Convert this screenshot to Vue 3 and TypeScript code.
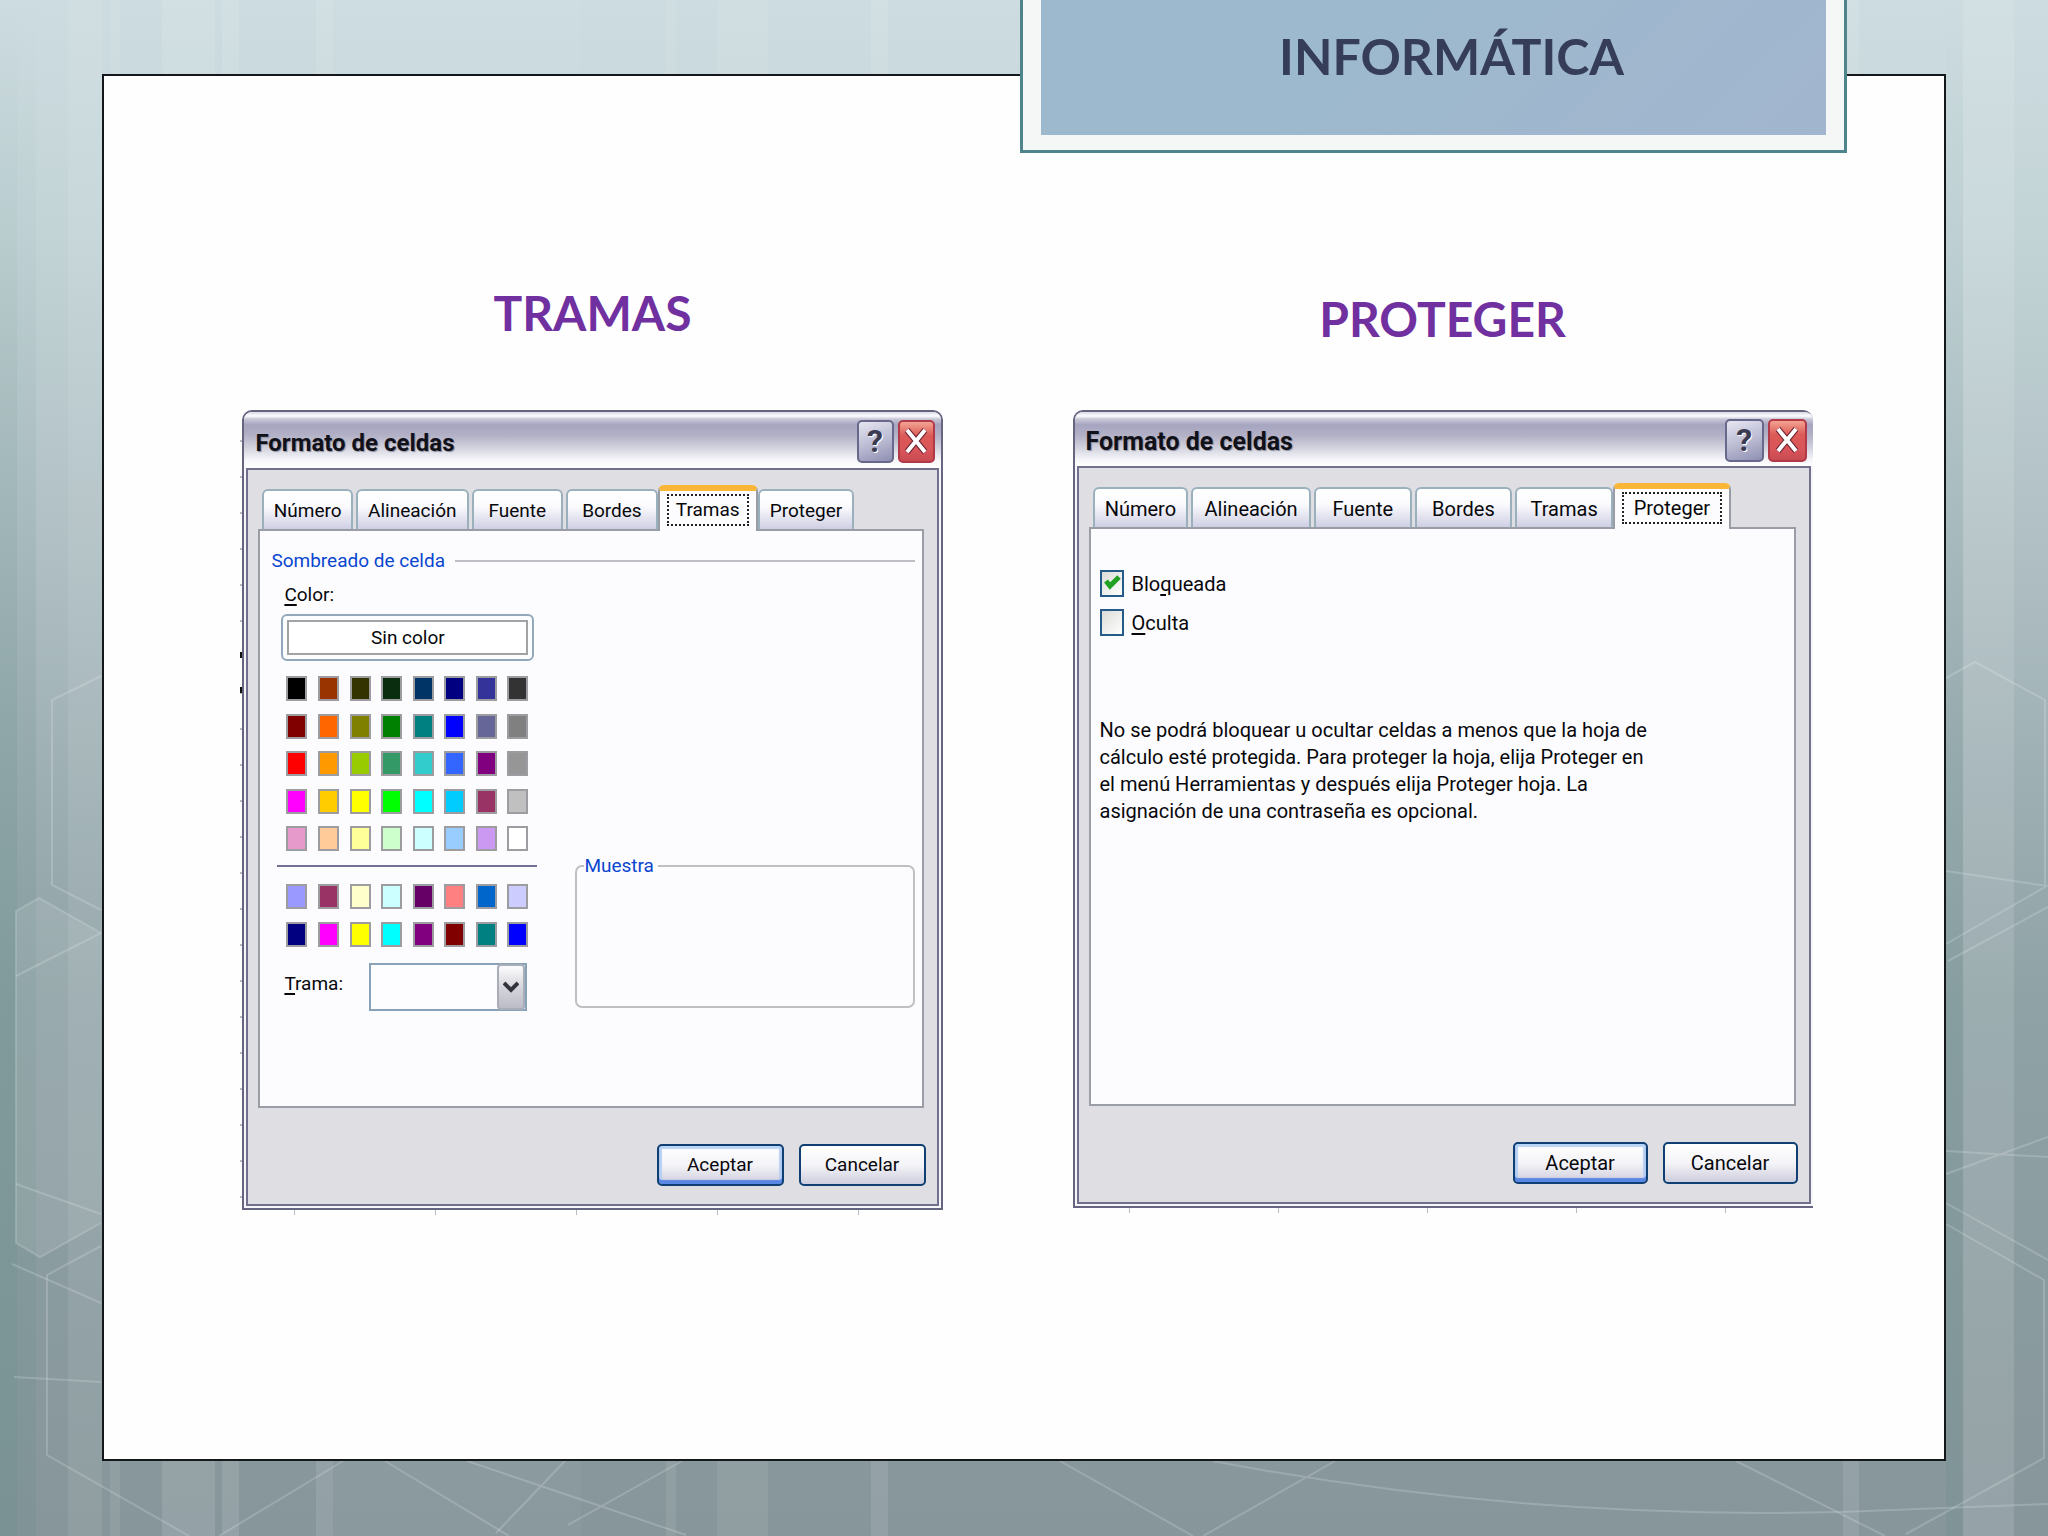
<script setup lang="ts">
import { ref } from 'vue'

interface Tab {
  name: string
  share: number
}

const fillTabs: Tab[] = [
  { name: 'Número', share: 91 },
  { name: 'Alineación', share: 114 },
  { name: 'Fuente', share: 92 },
  { name: 'Bordes', share: 92 },
  { name: 'Tramas', share: 101 },
  { name: 'Proteger', share: 97 },
]

const protectTabs: Tab[] = [
  { name: 'Número', share: 96 },
  { name: 'Alineación', share: 121 },
  { name: 'Fuente', share: 98 },
  { name: 'Bordes', share: 98 },
  { name: 'Tramas', share: 98 },
  { name: 'Proteger', share: 119 },
]

const mainColors: string[] = [
  '#000000', '#993300', '#333300', '#0a2d10', '#003366', '#000080', '#333399', '#333333',
  '#800000', '#ff6600', '#808000', '#008000', '#008080', '#0000ff', '#666699', '#808080',
  '#ff0000', '#ff9900', '#99cc00', '#339966', '#33cccc', '#3366ff', '#800080', '#969696',
  '#ff00ff', '#ffcc00', '#ffff00', '#00ff00', '#00ffff', '#00ccff', '#993366', '#c0c0c0',
  '#e69acb', '#ffcc99', '#ffff99', '#ccffcc', '#ccffff', '#99ccff', '#cc99f2', '#ffffff',
]

const extraColors: string[] = [
  '#9999ff', '#993366', '#ffffcc', '#ccffff', '#660066', '#ff8080', '#0066cc', '#ccccff',
  '#000080', '#ff00ff', '#ffff00', '#00ffff', '#800080', '#800000', '#008080', '#0000ff',
]

const stripes: [number, number, number][] = [
  [110, 10, 0.08], [162, 53, 0.11], [222, 17, 0.11], [316, 17, 0.1], [333, 248, 0.03],
  [666, 10, 0.08], [717, 51, 0.08], [871, 17, 0.1], [1843, 16, 0.1], [1963, 51, 0.12],
]

const locked = ref(true)
const hidden = ref(false)
</script>

<template>
  <div class="slide">
    <svg class="backdrop" viewBox="0 0 2048 1536" preserveAspectRatio="none" aria-hidden="true">
      <defs>
        <linearGradient id="base" x1="0" y1="0" x2="0" y2="1">
          <stop offset="0" stop-color="#cddce0" />
          <stop offset="0.15" stop-color="#c3d4d7" />
          <stop offset="0.35" stop-color="#b0c0c4" />
          <stop offset="0.5" stop-color="#9fb0b4" />
          <stop offset="0.65" stop-color="#8fa2a6" />
          <stop offset="0.85" stop-color="#8a9b9f" />
          <stop offset="1" stop-color="#87969b" />
        </linearGradient>
        <linearGradient id="edge" x1="0" y1="0" x2="0" y2="1">
          <stop offset="0" stop-color="#668c88" stop-opacity="0" />
          <stop offset="0.5" stop-color="#668c88" stop-opacity="0.18" />
          <stop offset="1" stop-color="#668c88" stop-opacity="0.22" />
        </linearGradient>
      </defs>
      <rect width="2048" height="1536" fill="url(#base)" />
      <rect width="17" height="1536" fill="url(#edge)" />
      <rect width="36" height="1536" fill="url(#edge)" />
      <rect x="68" y="0" width="34" height="1536" fill="#fff" opacity="0.08" />
      <rect x="1946" y="0" width="17" height="1536" fill="url(#edge)" />
      <rect
        v-for="s in stripes"
        :key="s[0]"
        :x="s[0]"
        y="0"
        :width="s[1]"
        height="1536"
        fill="#fff"
        :opacity="s[2]"
      />
      <path d="M16 911L39 898L101 933V1223L40 1257L16 1243Z" fill="#fff" opacity="0.09" />
      <g fill="none" stroke="#fff" stroke-opacity="0.18" stroke-width="2">
        <path d="M101 676L52 700V885L101 910M101 933L39 898L16 911V1243L40 1257L101 1223" />
        <path d="M16 976L101 933M16 1184L101 1214M12 1264L101 1303M14 1377L101 1382" />
        <path d="M101 1246L47 1275V1455L189 1536M219 1536L343 1461M385 1461L509 1536" />
        <path d="M467 1461L686 1535M565 1461L496 1533M568 1525L682 1461" />
        <path d="M1060 1461L1193 1536M1203 1536L1335 1461M1213 1461Q1520 1520 1840 1512L2048 1504" />
        <path d="M1736 1461L1885 1536M1906 1534L2044 1458V1280L1946 1224M1946 1203L2048 1260" />
        <path d="M1946 871L2048 886M1946 944L2045 887V700L1975 662L1946 678M1948 961L2048 907" />
        <path d="M1946 1151L2048 1157M1946 1174L2048 1137" />
      </g>
    </svg>

    <main class="sheet">
      <section class="column">
        <h2 class="heading">TRAMAS</h2>
        <div class="dialog fill">
          <header class="bar">
            <h3 class="bar-title">Formato de celdas</h3>
            <button type="button" class="tool help" aria-label="Ayuda">?</button>
            <button type="button" class="tool close" aria-label="Cerrar">
              <svg viewBox="0 0 24 26" aria-hidden="true">
                <path d="M3 2L21 24M21 2L3 24" stroke="#6b2030" stroke-width="6" />
                <path d="M3 2L21 24M21 2L3 24" stroke="#fff" stroke-width="4" />
              </svg>
            </button>
          </header>
          <div class="body">
            <div class="tabs" role="tablist">
              <button
                v-for="t in fillTabs"
                :key="t.name"
                type="button"
                role="tab"
                class="tab"
                :class="{ active: t.name === 'Tramas' }"
                :aria-selected="t.name === 'Tramas'"
                :style="{ flexGrow: t.share }"
              >
                <span class="tab-text">{{ t.name }}</span>
              </button>
            </div>
            <div class="panel" role="tabpanel">
              <div class="group-title"><span>Sombreado de celda</span></div>
              <div class="fill-grid">
                <div class="picker">
                  <div class="label"><u>C</u>olor:</div>
                  <button type="button" class="no-color"><span>Sin color</span></button>
                  <div class="palette">
                    <button
                      v-for="(c, i) in mainColors"
                      :key="i"
                      type="button"
                      class="swatch"
                      :aria-label="c"
                      :style="{ backgroundColor: c }"
                    ></button>
                  </div>
                  <hr class="rule" />
                  <div class="palette short">
                    <button
                      v-for="(c, i) in extraColors"
                      :key="i"
                      type="button"
                      class="swatch"
                      :aria-label="c"
                      :style="{ backgroundColor: c }"
                    ></button>
                  </div>
                  <div class="pattern">
                    <label for="pattern"><u>T</u>rama:</label>
                    <div class="combo">
                      <select id="pattern">
                        <option value=""></option>
                      </select>
                      <span class="arrow">
                        <svg viewBox="0 0 16 12" aria-hidden="true">
                          <path d="M1 2L8 9L15 2" fill="none" stroke="#33343c" stroke-width="4" />
                        </svg>
                      </span>
                    </div>
                  </div>
                </div>
                <fieldset class="sample">
                  <legend>Muestra</legend>
                </fieldset>
              </div>
            </div>
            <footer class="actions">
              <button type="button" class="action default">Aceptar</button>
              <button type="button" class="action">Cancelar</button>
            </footer>
          </div>
        </div>
      </section>

      <section class="column">
        <h2 class="heading low">PROTEGER</h2>
        <div class="dialog protect">
          <header class="bar">
            <h3 class="bar-title">Formato de celdas</h3>
            <button type="button" class="tool help" aria-label="Ayuda">?</button>
            <button type="button" class="tool close" aria-label="Cerrar">
              <svg viewBox="0 0 24 26" aria-hidden="true">
                <path d="M3 2L21 24M21 2L3 24" stroke="#6b2030" stroke-width="6" />
                <path d="M3 2L21 24M21 2L3 24" stroke="#fff" stroke-width="4" />
              </svg>
            </button>
          </header>
          <div class="body">
            <div class="tabs" role="tablist">
              <button
                v-for="t in protectTabs"
                :key="t.name"
                type="button"
                role="tab"
                class="tab"
                :class="{ active: t.name === 'Proteger' }"
                :aria-selected="t.name === 'Proteger'"
                :style="{ flexGrow: t.share }"
              >
                <span class="tab-text">{{ t.name }}</span>
              </button>
            </div>
            <div class="panel" role="tabpanel">
              <div class="checks">
                <label class="check"><input v-model="locked" type="checkbox" /><span>Blo<u>q</u>ueada</span></label>
                <label class="check"><input v-model="hidden" type="checkbox" /><span><u>O</u>culta</span></label>
              </div>
              <p class="note">
                No se podrá bloquear u ocultar celdas a menos que la hoja de cálculo esté protegida. Para
                proteger la hoja, elija Proteger en el menú Herramientas y después elija Proteger hoja. La
                asignación de una contraseña es opcional.
              </p>
            </div>
            <footer class="actions">
              <button type="button" class="action default">Aceptar</button>
              <button type="button" class="action">Cancelar</button>
            </footer>
          </div>
        </div>
      </section>
    </main>

    <div class="banner">
      <h1>INFORMÁTICA</h1>
    </div>
  </div>
</template>

<style>
body {
  margin: 0;
}
</style>

<style scoped>
*,
*::before,
*::after {
  box-sizing: border-box;
}

.slide {
  position: relative;
  display: flex;
  min-height: 100vh;
  padding: 74px 5% 75px;
  overflow: hidden;
  background: #9fb0b4;
}

.backdrop {
  position: absolute;
  inset: 0;
  width: 100%;
  height: 100%;
}

.sheet {
  position: relative;
  flex: 1;
  display: grid;
  grid-template-columns: 701fr 741fr;
  align-items: start;
  gap: 130px;
  padding: 0 131px 0 138px;
  border: 2px solid #15181a;
  background: #fefefe;
}

.banner {
  position: absolute;
  top: 0;
  left: 49.8%;
  right: 9.8%;
  padding: 0 18px 15px;
  border: 3px solid #4f848c;
  border-top: 0;
  background: #f4f7f6;
}

.banner h1 {
  height: 135px;
  margin: 0;
  padding: 26px 0 0 36px;
  background: linear-gradient(135deg, #9db9cd 40%, #a2b5cf);
  color: #363d59;
  font: 700 50px/60px Lato, sans-serif;
  text-align: center;
}

.heading {
  margin: 207px 0 67px;
  color: #7030a0;
  font: 700 48px/60px Lato, sans-serif;
  text-align: center;
}

.heading.low {
  margin: 213px 0 61px;
}

.dialog {
  position: relative;
  padding: 0 2px 2px;
  border: 2px solid #65657f;
  border-radius: 10px 10px 0 0;
  background: #f6f6fb;
  color: #08080c;
  font: 19px/28px Roboto, sans-serif;
}

.dialog.fill {
  --bar: 56px;
  --tool: 37px;
  --tabs: 86%;
  --action: 127px;
  --title: 24px;
}

.dialog.protect {
  --bar: 54px;
  --tool: 39px;
  --tabs: 87%;
  --action: 135px;
  --title: 25px;
  border-right: 0;
  font-size: 20px;
}

/* spreadsheet grid ends showing below the window */
.dialog::after {
  content: '';
  position: absolute;
  top: 100%;
  left: 50px;
  right: 0;
  height: 5px;
  margin-top: 2px;
  background: repeating-linear-gradient(90deg, #b9bac4 0 1px, transparent 1px 141px);
}

.dialog.protect::after {
  left: 54px;
  background: repeating-linear-gradient(90deg, #b9bac4 0 1px, transparent 1px 149px);
}

.dialog.fill::before {
  content: '';
  position: absolute;
  top: 28px;
  bottom: 0;
  right: 100%;
  width: 2px;
  margin-right: 2px;
  background:
    linear-gradient(#111, #111) 0 212px / 2px 6px no-repeat,
    linear-gradient(#111, #111) 0 247px / 2px 6px no-repeat,
    repeating-linear-gradient(180deg, #b9bac4 0 2px, transparent 2px 36px);
}

.bar {
  display: flex;
  align-items: center;
  gap: 4px;
  height: var(--bar);
  margin: 0 -2px;
  padding: 2px 6px 0 11px;
  border-radius: 8px 8px 0 0;
  background: linear-gradient(#d9d9e6 0, #fdfdff 4px, #c9c8d8 7px, #a6a4bf 13px, #b3b2c7 24px, #d3d3df 36px, #f6f6fa 48px, #fff);
}

.bar-title {
  flex: 1;
  margin: 0;
  padding-top: 4px;
  color: #11111a;
  font: inherit;
  font-size: var(--title);
  font-weight: 700;
  text-shadow: 1px 1px 1px #8e8ea0;
}

.tool {
  display: grid;
  place-items: center;
  width: var(--tool);
  height: 43px;
  padding: 0;
  border: 2px solid #68688a;
  border-radius: 5px;
  background: linear-gradient(160deg, #e6e6f2, #b9b9d2 55%, #8e8eb2);
  color: #3a3a50;
  font: 700 32px/36px Roboto, sans-serif;
  text-shadow: 1px 1px 0 #fff;
}

.tool.close {
  border-color: #b23a48;
  background: linear-gradient(#f3a493, #dc5a56 35%, #d9555a 70%, #c94b52);
}

.tool svg {
  width: 24px;
  height: 26px;
}

.body {
  border: 2px solid #70708c;
  background: #dfdfe3;
}

.tabs {
  display: flex;
  align-items: flex-end;
  gap: 3px;
  width: var(--tabs);
  height: 44px;
  margin: 15px 0 0 14px;
}

.tab {
  flex: 1 1 0;
  min-width: 0;
  height: 40px;
  padding: 0;
  border: 2px solid #9bb0bd;
  border-bottom: 0;
  border-radius: 6px 6px 0 0;
  background: linear-gradient(#fff 0, #fbfbfe 40%, #cfcfe4);
  color: inherit;
  font: inherit;
}

.tab-text {
  display: block;
  padding-top: 2px;
}

.tab.active {
  position: relative;
  height: 46px;
  margin: 0 -3px -2px;
  padding-bottom: 2px;
  border-color: #9a9ca6;
  border-top: 6px solid #f9b637;
  background: #fcfcfe;
}

.tab.active .tab-text {
  margin: 0 7px;
  padding: 0;
  border: 2px dotted #222;
}

.panel {
  min-height: 579px;
  margin: 0 13px 0 10px;
  border: 2px solid #9a9ca6;
  background: #fcfcfe;
}

.group-title {
  display: flex;
  align-items: center;
  gap: 10px;
  padding: 16px 7px 0 11px;
  color: #0a46d0;
}

.group-title::after {
  content: '';
  flex: 1;
  height: 2px;
  background: #bdbdc3;
}

.fill-grid {
  display: grid;
  grid-template-columns: 260px 1fr;
  align-items: end;
  gap: 38px;
  padding: 6px 7px 0 17px;
}

.picker {
  display: flex;
  flex-direction: column;
}

.label {
  padding-left: 7px;
}

u {
  text-decoration-thickness: 2px;
  text-underline-offset: 3px;
}

.no-color {
  height: 47px;
  margin: 5px 3px 0 4px;
  padding: 4px;
  border: 2px solid #93a8ba;
  border-radius: 6px;
  background: #fcfdfe;
  color: inherit;
  font: inherit;
}

.no-color span {
  display: block;
  border: 2px solid #a3a3a3;
  background: #fff;
  line-height: 31px;
}

.palette {
  display: grid;
  grid-template-columns: repeat(8, 21px);
  justify-content: space-between;
  align-content: space-between;
  height: 175px;
  margin: 15px 9px 0;
}

.palette.short {
  height: 63px;
  margin-top: 17px;
}

.swatch {
  height: 25px;
  padding: 0;
  border: 2px solid #9d9da1;
}

.rule {
  width: 100%;
  height: 2px;
  margin: 14px 0 0;
  border: 0;
  background: #716f94;
}

.pattern {
  display: flex;
  justify-content: space-between;
  margin-top: 16px;
  padding: 0 10px 0 7px;
}

.pattern label {
  padding-top: 7px;
}

.combo {
  display: grid;
  width: 158px;
  height: 48px;
}

.combo select {
  grid-area: 1 / 1;
  appearance: none;
  border: 2px solid #88a2b8;
  border-radius: 0;
  background: #fdfdff;
  font: inherit;
}

.arrow {
  grid-area: 1 / 1;
  justify-self: end;
  display: grid;
  place-items: center;
  width: 28px;
  margin: 1px 2px;
  border: 2px solid #a9adba;
  border-radius: 4px;
  background: linear-gradient(#fdfdff, #d6d6dc 50%, #bcbcc8);
  pointer-events: none;
}

.arrow svg {
  width: 16px;
  height: 12px;
}

.sample {
  height: 156px;
  min-width: 0;
  margin: 0 0 3px;
  padding: 0 7px;
  border: 2px solid #c0c0c4;
  border-radius: 7px;
}

.sample legend {
  padding: 0 4px 0 0;
  color: #0a46d0;
}

.checks {
  display: flex;
  flex-direction: column;
  gap: 12px;
  padding: 41px 9px 0;
}

.check {
  display: flex;
  align-items: center;
  gap: 8px;
  height: 27px;
}

.check input {
  appearance: none;
  width: 24px;
  height: 27px;
  margin: 0;
  border: 2px solid #265a88;
  background: linear-gradient(135deg, #dcdcd8, #fff);
}

.check input:checked {
  background:
    url("data:image/svg+xml,%3Csvg xmlns='http://www.w3.org/2000/svg' viewBox='0 0 20 23'%3E%3Cpath d='M4 9L8 14L17 5' fill='none' stroke='%2321a121' stroke-width='5'/%3E%3C/svg%3E") center / 100% 100% no-repeat,
    linear-gradient(135deg, #dcdcd8, #fff);
}

.note {
  max-width: 560px;
  margin: 81px 9px 0;
  line-height: 27px;
}

.actions {
  display: flex;
  justify-content: flex-end;
  gap: 15px;
  padding: 36px 11px 18px;
}

.action {
  width: var(--action);
  height: 42px;
  padding: 0;
  border: 2px solid #0f3f73;
  border-radius: 5px;
  background: linear-gradient(#fff, #f4f4f8 50%, #cecddd);
  color: inherit;
  font: inherit;
}

.action.default {
  box-shadow: inset 0 4px 1px -1px #b8d4f6, inset 0 -4px 1px #5a86e4, inset 3px 0 1px #b8cff2, inset -3px 0 1px #b8cff2;
}
</style>
